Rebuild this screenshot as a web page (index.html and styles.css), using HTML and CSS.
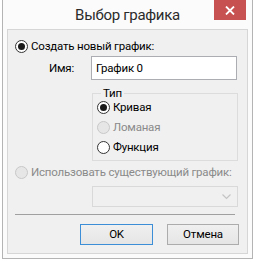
FILE: index.html
```html
<!DOCTYPE html>
<html>
<head>
<meta charset="utf-8">
<link rel="stylesheet" href="styles.css">
</head>
<body>
<div class="window">
  <div class="titlebar">
    <span class="title">Выбор графика</span>
    <span class="close"><svg width="10" height="9" viewBox="0 0 10 9"><path d="M1 0.5 L9 8.5 M9 0.5 L1 8.5" stroke="#fff" stroke-width="1.8" fill="none"/></svg></span>
  </div>
  <div class="client">
    <div class="radio-row first"><span class="radio checked"></span><span>Создать новый график:</span></div>
    <div class="name-row"><span class="name-label">Имя:</span><div class="textbox">График 0</div></div>
    <fieldset class="type">
      <legend>Тип</legend>
      <div class="radio-row"><span class="radio checked"></span><span>Кривая</span></div>
      <div class="radio-row disabled"><span class="radio"></span><span>Ломаная</span></div>
      <div class="radio-row"><span class="radio"></span><span>Функция</span></div>
    </fieldset>
    <div class="radio-row second disabled"><span class="radio"></span><span>Использовать существующий график:</span></div>
    <div class="combo"><svg width="9" height="6" viewBox="0 0 9 6"><path d="M0.5 0.5 L4.5 4.5 L8.5 0.5" stroke="#c4c4c4" stroke-width="1.2" fill="none"/></svg></div>
    <div class="sep"></div>
    <div class="buttons">
      <div class="btn default">OK</div>
      <div class="btn">Отмена</div>
    </div>
  </div>
</div>
</body>
</html>
```
FILE: styles.css
```css
html, body {
  margin: 0;
  padding: 0;
  background: #ffffff;
}
body {
  font-family: Roboto, "Noto Sans", sans-serif;
  font-size: 11.5px;
  letter-spacing: -0.2px;
  color: #000;
}
.window {
  box-sizing: border-box;
  margin-left: 2px;
  width: 251px;
  height: 259px;
  border: 1px solid #b4b4b4;
  border-top: none;
  background: #fbfbfb;
  padding: 0 4px 4px 4px;
  display: flex;
  flex-direction: column;
}
.titlebar {
  position: relative;
  height: 29px;
  flex: none;
}
.title {
  display: block;
  text-align: center;
  font-size: 15px;
  letter-spacing: -0.3px;
  line-height: 20px;
  padding-top: 5px;
  color: #2b2b2b;
}
.close {
  position: absolute;
  right: 2px;
  top: 0;
  width: 32px;
  height: 20px;
  background: #c75050;
  display: flex;
  align-items: center;
  justify-content: center;
}
.client {
  flex: 1;
  background: #f0f0f0;
  border: 1px solid #d6d6d6;
  display: flex;
  flex-direction: column;
}
.radio-row {
  display: flex;
  align-items: center;
  height: 15px;
  line-height: 15px;
  white-space: nowrap;
}
.radio-row.first {
  margin: 9px 0 0 7px;
}
.radio {
  box-sizing: border-box;
  width: 13px;
  height: 13px;
  border-radius: 50%;
  border: 1px solid #333;
  background: #fff;
  margin-right: 3px;
  flex: none;
  display: flex;
  align-items: center;
  justify-content: center;
}
.radio.checked::after {
  content: "";
  width: 7px;
  height: 7px;
  border-radius: 50%;
  background: #1a1a1a;
}
.disabled {
  color: #8a8a8a;
}
.disabled .radio {
  border-color: #c8c8c8;
  background: #e6e6e6;
}
.name-row {
  display: flex;
  align-items: center;
  margin: 2px 0 0 41px;
}
.name-label {
  width: 42px;
}
.textbox {
  box-sizing: border-box;
  width: 146px;
  height: 24px;
  border: 1px solid #abadb3;
  background: #fff;
  padding-left: 4px;
  line-height: 22px;
}
.type {
  box-sizing: border-box;
  width: 146px;
  height: 75px;
  margin: 6px 0 0 84px;
  padding: 0 0 0 8px;
  border: 1px solid #dcdcdc;
  display: flex;
  flex-direction: column;
  gap: 5px;
}
.type legend {
  padding: 0 2px;
  line-height: 14px;
}
.type .radio-row {
  margin-left: -4px;
}
.radio-row.second {
  margin: 4px 0 0 7px;
}
.combo {
  box-sizing: border-box;
  width: 146px;
  height: 21px;
  margin: 6px 0 0 84px;
  border: 1px solid #d9d9d9;
  display: flex;
  align-items: center;
  justify-content: flex-end;
  padding-right: 6px;
}
.sep {
  height: 1px;
  background: #a0a0a0;
  margin: 7px 0 0 7px;
  width: 220px;
}
.buttons {
  display: flex;
  gap: 14px;
  margin: 9px 0 0 72px;
}
.btn {
  box-sizing: border-box;
  width: 72px;
  height: 21px;
  border: 1px solid #acacac;
  background: linear-gradient(#f0f0f0, #e5e5e5);
  text-align: center;
  line-height: 19px;
}
.btn.default {
  border-color: #3c8ed6;
  width: 73px;
}
```
